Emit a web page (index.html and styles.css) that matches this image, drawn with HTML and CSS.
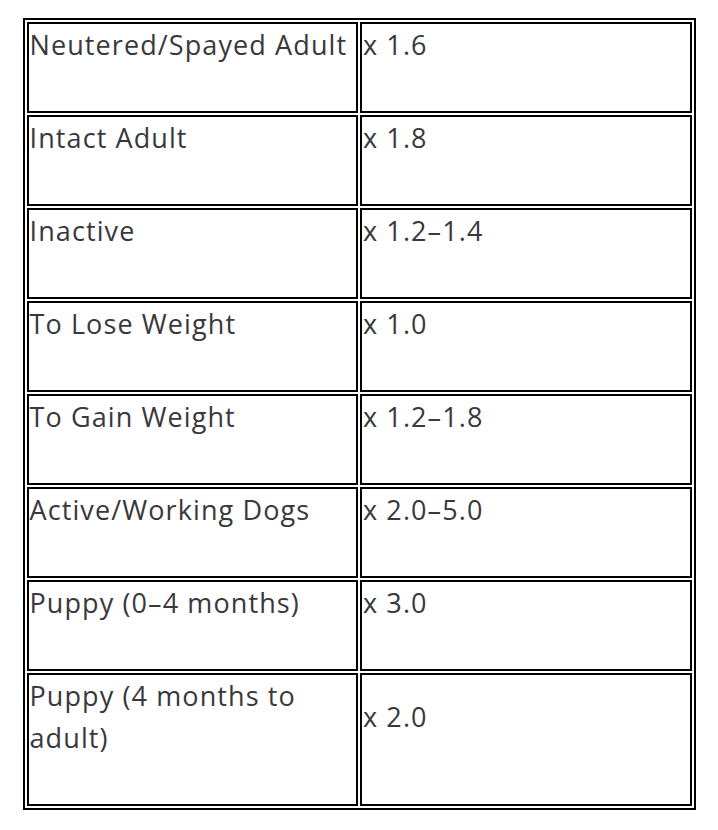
FILE: index.html
```html
<!DOCTYPE html>
<html>
<head>
<meta charset="utf-8">
<link rel="stylesheet" href="styles.css">
</head>
<body>
<table class="factors">
  <tbody>
    <tr><td><p>Neutered/Spayed Adult</p></td><td><p>x 1.6</p></td></tr>
    <tr><td><p>Intact Adult</p></td><td><p>x 1.8</p></td></tr>
    <tr><td><p>Inactive</p></td><td><p>x 1.2–1.4</p></td></tr>
    <tr><td><p>To Lose Weight</p></td><td><p>x 1.0</p></td></tr>
    <tr><td><p>To Gain Weight</p></td><td><p>x 1.2–1.8</p></td></tr>
    <tr><td><p>Active/Working Dogs</p></td><td><p>x 2.0–5.0</p></td></tr>
    <tr><td><p>Puppy (0–4 months)</p></td><td><p>x 3.0</p></td></tr>
    <tr><td><p>Puppy (4 months to adult)</p></td><td><p>x 2.0</p></td></tr>
  </tbody>
</table>
</body>
</html>
```
FILE: styles.css
```css
html, body {
  margin: 0;
  padding: 0;
  background: #ffffff;
}
body {
  padding-top: 18px;
  font-family: "Open Sans", "Liberation Sans", sans-serif;
  color: #38383d;
}
.factors {
  width: 673px;
  margin: 0 auto;
  border: 2px solid #000;
  border-spacing: 2px;
  table-layout: fixed;
}
.factors td {
  width: 50%;
  border: 2px solid #000;
  padding: 0 1px;
  vertical-align: middle;
}
.factors p {
  margin: 0 0 45px 0;
  font-size: 27px;
  line-height: 42px;
  letter-spacing: 1.1px;
}
```
